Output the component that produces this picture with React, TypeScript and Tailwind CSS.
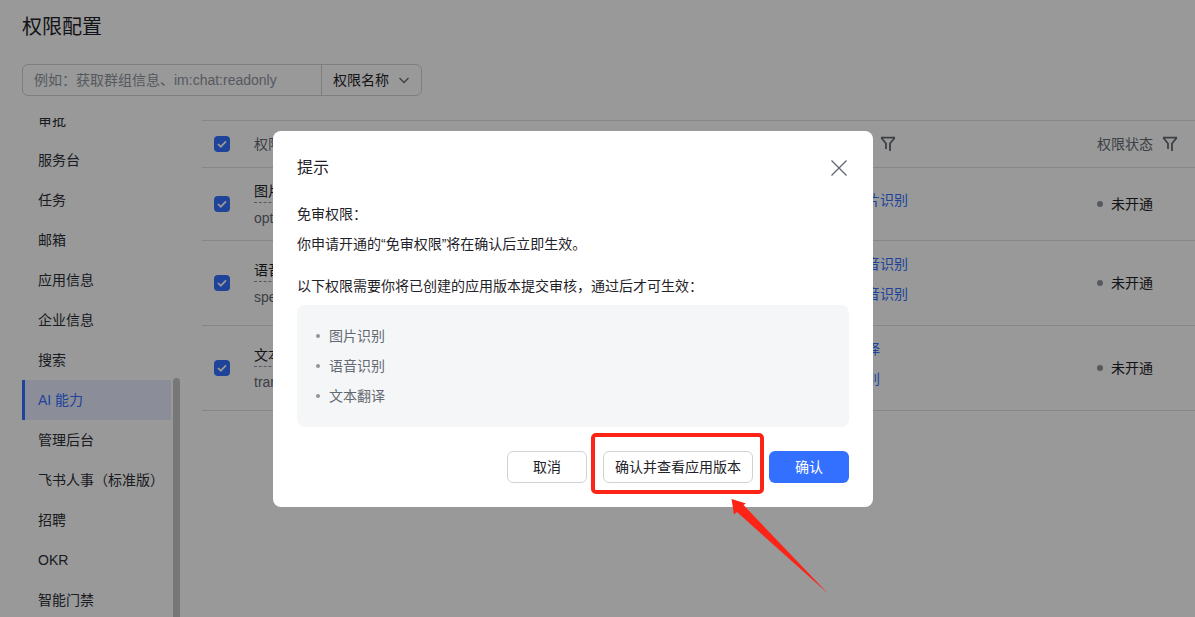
const font = { fontFamily: '"Liberation Sans", "Noto Sans CJK SC", sans-serif' };

const menu = ['审批', '服务台', '任务', '邮箱', '应用信息', '企业信息', '搜索', 'AI 能力', '管理后台', '飞书人事（标准版）', '招聘', 'OKR', '智能门禁'];

const rows = [
  { name: '图片识别', desc: 'optical_char_recognition:image', links: ['图片识别'], h: 'h-[73px]', pb: 'pb-[8px]' },
  { name: '语音识别', desc: 'speech_to_text:speech', links: ['语音识别', '语音识别'], h: 'h-[85px]', pb: 'pb-[8px]' },
  { name: '文本翻译', desc: 'translation:text:translate', links: ['翻译', '识别'], h: 'h-[85px]', pb: 'pb-[7px]' },
];

function Check() {
  return (
    <div className="w-4 h-4 rounded-[4px] bg-[#3370ff] flex items-center justify-center shrink-0">
      <svg width="10" height="8" viewBox="0 0 10 8" fill="none">
        <path d="M1 4l2.8 2.7L9 1.3" stroke="#fff" strokeWidth="1.7" />
      </svg>
    </div>
  );
}

function Funnel() {
  return (
    <svg width="16" height="16" viewBox="0 0 16 16" fill="none" stroke="#646a73" strokeWidth="1.8">
      <path d="M1 1.7h14M1.3 1.7L6 7.5V13M14.7 1.7L10 7.5V15" />
    </svg>
  );
}

export default function App() {
  return (
    <div className="relative h-screen w-full overflow-hidden bg-white text-[14px] text-[#1f2329]" style={font}>
      <div className="px-[22px] pt-[13px]">
        <div className="text-[20px] leading-[28px]">权限配置</div>
        <div className="mt-[23px] flex h-8 w-[400px] items-center rounded-[6px] border border-[#d0d3d6]">
          <div className="flex w-[298px] items-center whitespace-nowrap pl-[11px] text-[#8f959e]">例如：获取群组信息、im:chat:readonly</div>
          <div className="flex h-full flex-1 items-center border-l border-[#d0d3d6] pl-[11px]">
            <span>权限名称</span>
            <svg className="ml-[9px]" width="12" height="12" viewBox="0 0 12 12" fill="none">
              <path d="M1.5 4l4.5 4.5L10.5 4" stroke="#646a73" strokeWidth="1.3" />
            </svg>
          </div>
        </div>
      </div>

      <div className="mt-[22px] flex pl-[22px]">
        <div className="relative h-[499px] w-[158px] shrink-0 overflow-hidden">
          <div className="mt-[-18px] w-[149px]">
            {menu.map((m) =>
              m === 'AI 能力' ? (
                <div key={m} className="flex h-10 items-center border-l-[3px] border-[#3370ff] bg-[#e8edff] pl-[13px] text-[#3370ff]">{m}</div>
              ) : (
                <div key={m} className="flex h-10 items-center whitespace-nowrap pl-4 text-[#2b2f36]">{m}</div>
              )
            )}
          </div>
          <div className="absolute left-[151px] top-[260px] h-[300px] w-[7px] rounded-t-[4px] bg-[#c6c6c6]" />
        </div>

        <div className="ml-[22px] mt-[2px] flex-1">
          <div className="flex h-[48px] items-center border-y border-[#dee0e3] text-[#646a73]">
            <div className="w-[52px] pl-3"><Check /></div>
            <div className="w-[626px]">权限名称</div>
            <div className="w-[217px]"><Funnel /></div>
            <div className="flex items-center gap-[9px]">
              <span>权限状态</span>
              <Funnel />
            </div>
          </div>
          {rows.map((r) => (
            <div key={r.name} className={`flex items-center border-b border-[#dee0e3] ${r.h}`}>
              <div className="w-[52px] pl-3"><Check /></div>
              <div className="w-[598px]">
                <div className="w-max border-b border-dashed border-[#8f959e] leading-[21px] text-[#1f2329]">{r.name}</div>
                <div className="mt-[5px] leading-[20px] text-[#646a73]">{r.desc}</div>
              </div>
              <div className={`flex w-[245px] flex-col gap-[9px] ${r.pb} text-[#3370ff]`}>
                {r.links.map((l, i) => (
                  <div key={i} className="leading-[21px]">{l}</div>
                ))}
              </div>
              <div className="flex items-center text-[#1f2329]">
                <span className="mr-[8px] h-[6px] w-[6px] rounded-full bg-[#8f959e]" />
                <span>未开通</span>
              </div>
            </div>
          ))}
        </div>
      </div>

      <div className="absolute inset-0 bg-black/40" />

      <div className="absolute left-[273px] top-[131px] h-[376px] w-[600px] rounded-[8px] bg-white px-6 text-[#1f2329]">
        <div className="flex h-[73px] items-center justify-between">
          <span className="text-[16px]">提示</span>
          <svg width="18" height="18" viewBox="0 0 18 18" fill="none" className="mr-[1px]">
            <path d="M1.5 1.5l15 15M16.5 1.5l-15 15" stroke="#646a73" strokeWidth="1.4" />
          </svg>
        </div>
        <div className="leading-[20px]">免审权限：</div>
        <div className="mt-[10px] leading-[20px]">你申请开通的“免审权限”将在确认后立即生效。</div>
        <div className="mt-[22px] leading-[20px]">以下权限需要你将已创建的应用版本提交审核，通过后才可生效：</div>
        <div className="mt-[9px] flex h-[122px] flex-col justify-center gap-[10px] rounded-[8px] bg-[#f5f6f7] pl-[19px] text-[#646a73]">
          {['图片识别', '语音识别', '文本翻译'].map((t) => (
            <div key={t} className="flex items-center leading-[20px]">
              <span className="mr-[9px] h-1 w-1 rounded-full bg-[#8f959e]" />
              {t}
            </div>
          ))}
        </div>
        <div className="mt-6 flex justify-end gap-4">
          <div className="flex h-8 w-20 items-center justify-center rounded-[6px] border border-[#d0d3d6]">取消</div>
          <div className="flex h-8 w-[150px] items-center justify-center rounded-[6px] border border-[#d0d3d6]">确认并查看应用版本</div>
          <div className="flex h-8 w-20 items-center justify-center rounded-[6px] bg-[#3370ff] text-white">确认</div>
        </div>
      </div>

      <div className="absolute left-[591px] top-[433px] h-[61px] w-[173px] rounded-[5px] border-4 border-[#fc2317]" />
      <svg className="absolute left-[725px] top-[495px]" width="110" height="105" viewBox="725 495 110 105">
        <path d="M731.5 499L746 503.5L743.5 505L828 593.5L737 512L734 514.5Z" fill="#fc2317" />
      </svg>
    </div>
  );
}
